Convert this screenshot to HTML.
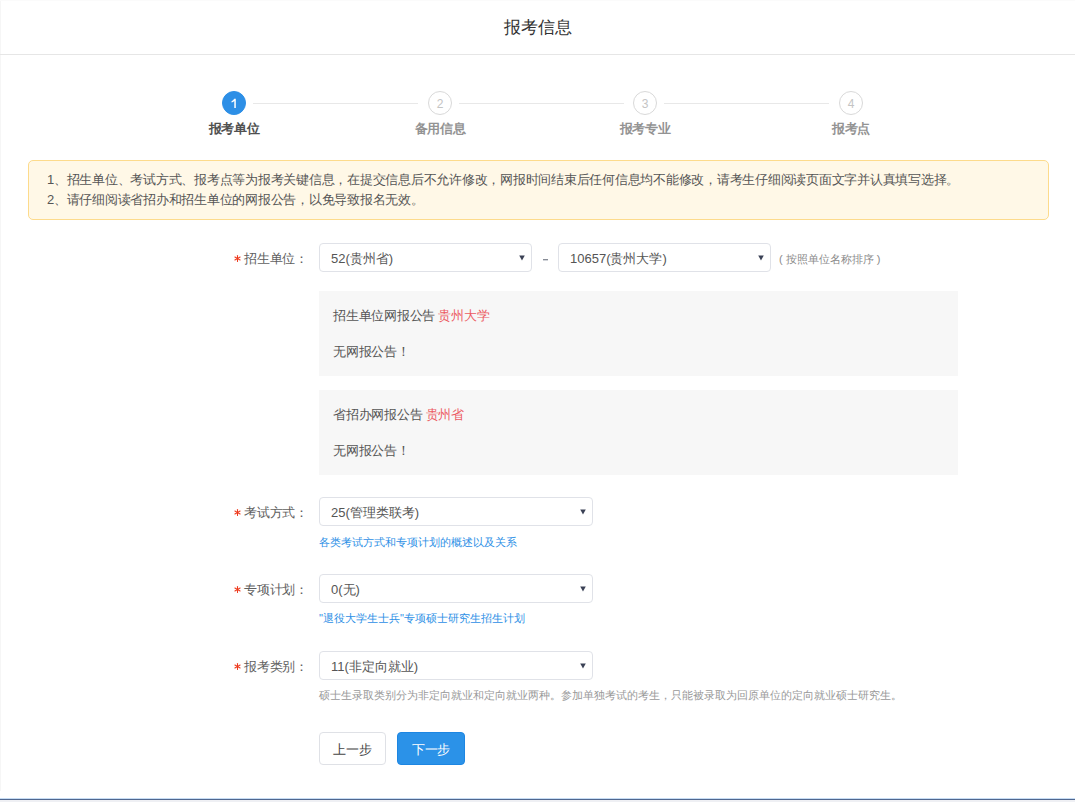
<!DOCTYPE html>
<html><head><meta charset="utf-8">
<style>
*{box-sizing:border-box;margin:0;padding:0}
html,body{width:1075px;height:802px;overflow:hidden;background:#fff}
body{font-family:"Liberation Sans",sans-serif;color:#333;position:relative}
.abs{position:absolute;white-space:nowrap}
.lb{position:absolute;left:0;top:0;width:1px;height:791px;background:#f6f6f6}
.tb{position:absolute;left:0;top:0;width:1075px;height:1px;background:#fbfbfb}
.hdr{position:absolute;left:0;top:54px;width:1075px;height:1px;background:#e6e6e6}
.title{position:absolute;left:0;width:1075px;top:17px;text-align:center;font-size:16.5px;line-height:20px;color:#333}
.circle{position:absolute;width:24px;height:24px;border-radius:50%;border:1px solid #d9d9d9;color:#c4c4c4;font-size:12px;line-height:22px;padding-top:1px;text-align:center;top:91px}
.circle.on{background:#2d8fe6;border-color:#2d8fe6;color:#fff}
.sline{position:absolute;top:103px;height:1px;background:#e8e8e8}
.slab{position:absolute;top:120px;font-size:13px;letter-spacing:-0.25px;line-height:18px;font-weight:bold;color:#939393;width:120px;text-align:center}
.slab.on{color:#505050}
.warn{position:absolute;left:28px;top:160px;width:1021px;height:60px;background:#fff8e7;border:1px solid #fddb8c;border-radius:5px;padding:9px 0 0 18px;font-size:13px;letter-spacing:-0.25px;line-height:20px;color:#555;white-space:nowrap}
.lbl{position:absolute;left:244px;font-size:13px;letter-spacing:-0.25px;line-height:18px;color:#606060;white-space:nowrap}
.ast{position:absolute;left:234px;width:7px;height:7px}
.sel{position:absolute;height:29px;border:1px solid #e0e2e8;border-radius:4px;font-size:13px;line-height:28px;padding:1px 0 0 11px;color:#555;background:#fff;white-space:nowrap}
.sel svg{position:absolute;right:6px;top:11px;width:6px;height:6px}
.note{position:absolute;left:319px;width:639px;height:85px;background:#f7f7f7;font-size:13px;letter-spacing:-0.25px;line-height:18px;color:#555}
.note p{position:absolute;left:14px;white-space:nowrap}
.red{color:#ec5a62}
.link{position:absolute;left:319px;font-size:11px;line-height:14px;color:#2d8fe6;white-space:nowrap}
.help{position:absolute;left:319px;font-size:11px;line-height:14px;color:#999;white-space:nowrap}
.btn{position:absolute;top:732px;width:68px;height:33px;border-radius:4px;font-size:13px;letter-spacing:-0.25px;line-height:31px;padding-top:1px;text-align:center}
.b1{position:absolute;left:0;top:798px;width:1075px;height:1px;background:#c6dcf4}
.b2{position:absolute;left:0;top:799px;width:1075px;height:1px;background:#50678f}
.b3{position:absolute;left:0;top:800px;width:1075px;height:2px;background:#eff0f4}
</style></head><body>
<div class="lb"></div>
<div class="tb"></div>
<div class="hdr"></div>
<div class="title">报考信息</div>

<div class="sline" style="left:253px;width:165px"></div>
<div class="sline" style="left:459px;width:165px"></div>
<div class="sline" style="left:664px;width:165px"></div>
<div class="circle on" style="left:222px"><svg style="position:absolute;left:-1px;top:-1px" width="24" height="24" viewBox="0 0 24 24"><path d="M12.2 7.7 H13.8 V17 H12.3 V9.9 Q11.2 10.9 9.5 11.5 V10.2 Q11.3 9.4 12.2 7.7 Z" fill="#fff"/></svg></div>
<div class="circle" style="left:428px">2</div>
<div class="circle" style="left:633px">3</div>
<div class="circle" style="left:839px">4</div>
<div class="slab on" style="left:174px">报考单位</div>
<div class="slab" style="left:380px">备用信息</div>
<div class="slab" style="left:585px">报考专业</div>
<div class="slab" style="left:791px">报考点</div>

<div class="warn">1、招生单位、考试方式、报考点等为报考关键信息，在提交信息后不允许修改，网报时间结束后任何信息均不能修改，请考生仔细阅读页面文字并认真填写选择。<br>2、请仔细阅读省招办和招生单位的网报公告，以免导致报名无效。</div>

<svg class="ast" style="top:255px" viewBox="0 0 7 7"><g stroke="#ee3a1e" stroke-width="1.05" stroke-linecap="round"><line x1="3.5" y1="0.6" x2="3.5" y2="6.4"/><line x1="0.9" y1="2" x2="6.1" y2="5"/><line x1="0.9" y1="5" x2="6.1" y2="2"/></g></svg>
<div class="lbl" style="top:250px">招生单位：</div>
<div class="sel" style="left:319px;top:243px;width:213px">52(贵州省)<svg viewBox="0 0 6 6"><polygon points="0.2,0.6 5.8,0.6 3,5.6" fill="#3a4155"/></svg></div>
<div class="abs" style="left:543px;top:259px;width:4.5px;height:1px;background:#878c96;box-shadow:0 1px 0 #d2d5da"></div>
<div class="sel" style="left:558px;top:243px;width:213px">10657(贵州大学)<svg viewBox="0 0 6 6"><polygon points="0.2,0.6 5.8,0.6 3,5.6" fill="#3a4155"/></svg></div>
<div class="abs" style="left:779px;top:252px;font-size:11px;line-height:14px;color:#8a8a8a">( 按照单位名称排序 )</div>

<div class="note" style="top:291px"><p style="top:16px">招生单位网报公告 <span class="red">贵州大学</span></p><p style="top:52px">无网报公告！</p></div>
<div class="note" style="top:390px"><p style="top:16px">省招办网报公告 <span class="red">贵州省</span></p><p style="top:52px">无网报公告！</p></div>

<svg class="ast" style="top:509px" viewBox="0 0 7 7"><g stroke="#ee3a1e" stroke-width="1.05" stroke-linecap="round"><line x1="3.5" y1="0.6" x2="3.5" y2="6.4"/><line x1="0.9" y1="2" x2="6.1" y2="5"/><line x1="0.9" y1="5" x2="6.1" y2="2"/></g></svg>
<div class="lbl" style="top:504px">考试方式：</div>
<div class="sel" style="left:319px;top:497px;width:274px">25(管理类联考)<svg viewBox="0 0 6 6"><polygon points="0.2,0.6 5.8,0.6 3,5.6" fill="#3a4155"/></svg></div>
<div class="link" style="top:535px">各类考试方式和专项计划的概述以及关系</div>

<svg class="ast" style="top:586px" viewBox="0 0 7 7"><g stroke="#ee3a1e" stroke-width="1.05" stroke-linecap="round"><line x1="3.5" y1="0.6" x2="3.5" y2="6.4"/><line x1="0.9" y1="2" x2="6.1" y2="5"/><line x1="0.9" y1="5" x2="6.1" y2="2"/></g></svg>
<div class="lbl" style="top:581px">专项计划：</div>
<div class="sel" style="left:319px;top:574px;width:274px">0(无)<svg viewBox="0 0 6 6"><polygon points="0.2,0.6 5.8,0.6 3,5.6" fill="#3a4155"/></svg></div>
<div class="link" style="top:611px">"退役大学生士兵"专项硕士研究生招生计划</div>

<svg class="ast" style="top:663px" viewBox="0 0 7 7"><g stroke="#ee3a1e" stroke-width="1.05" stroke-linecap="round"><line x1="3.5" y1="0.6" x2="3.5" y2="6.4"/><line x1="0.9" y1="2" x2="6.1" y2="5"/><line x1="0.9" y1="5" x2="6.1" y2="2"/></g></svg>
<div class="lbl" style="top:658px">报考类别：</div>
<div class="sel" style="left:319px;top:651px;width:274px">11(非定向就业)<svg viewBox="0 0 6 6"><polygon points="0.2,0.6 5.8,0.6 3,5.6" fill="#3a4155"/></svg></div>
<div class="help" style="top:688px">硕士生录取类别分为非定向就业和定向就业两种。参加单独考试的考生，只能被录取为回原单位的定向就业硕士研究生。</div>

<div class="btn" style="left:319px;width:67px;border:1px solid #dfe1e6;color:#444;background:#fff">上一步</div>
<div class="btn" style="left:397px;border:1px solid #1d86e2;background:#2b92e8;color:#fff">下一步</div>

<div class="b1"></div><div class="b2"></div><div class="b3"></div>
</body></html>
